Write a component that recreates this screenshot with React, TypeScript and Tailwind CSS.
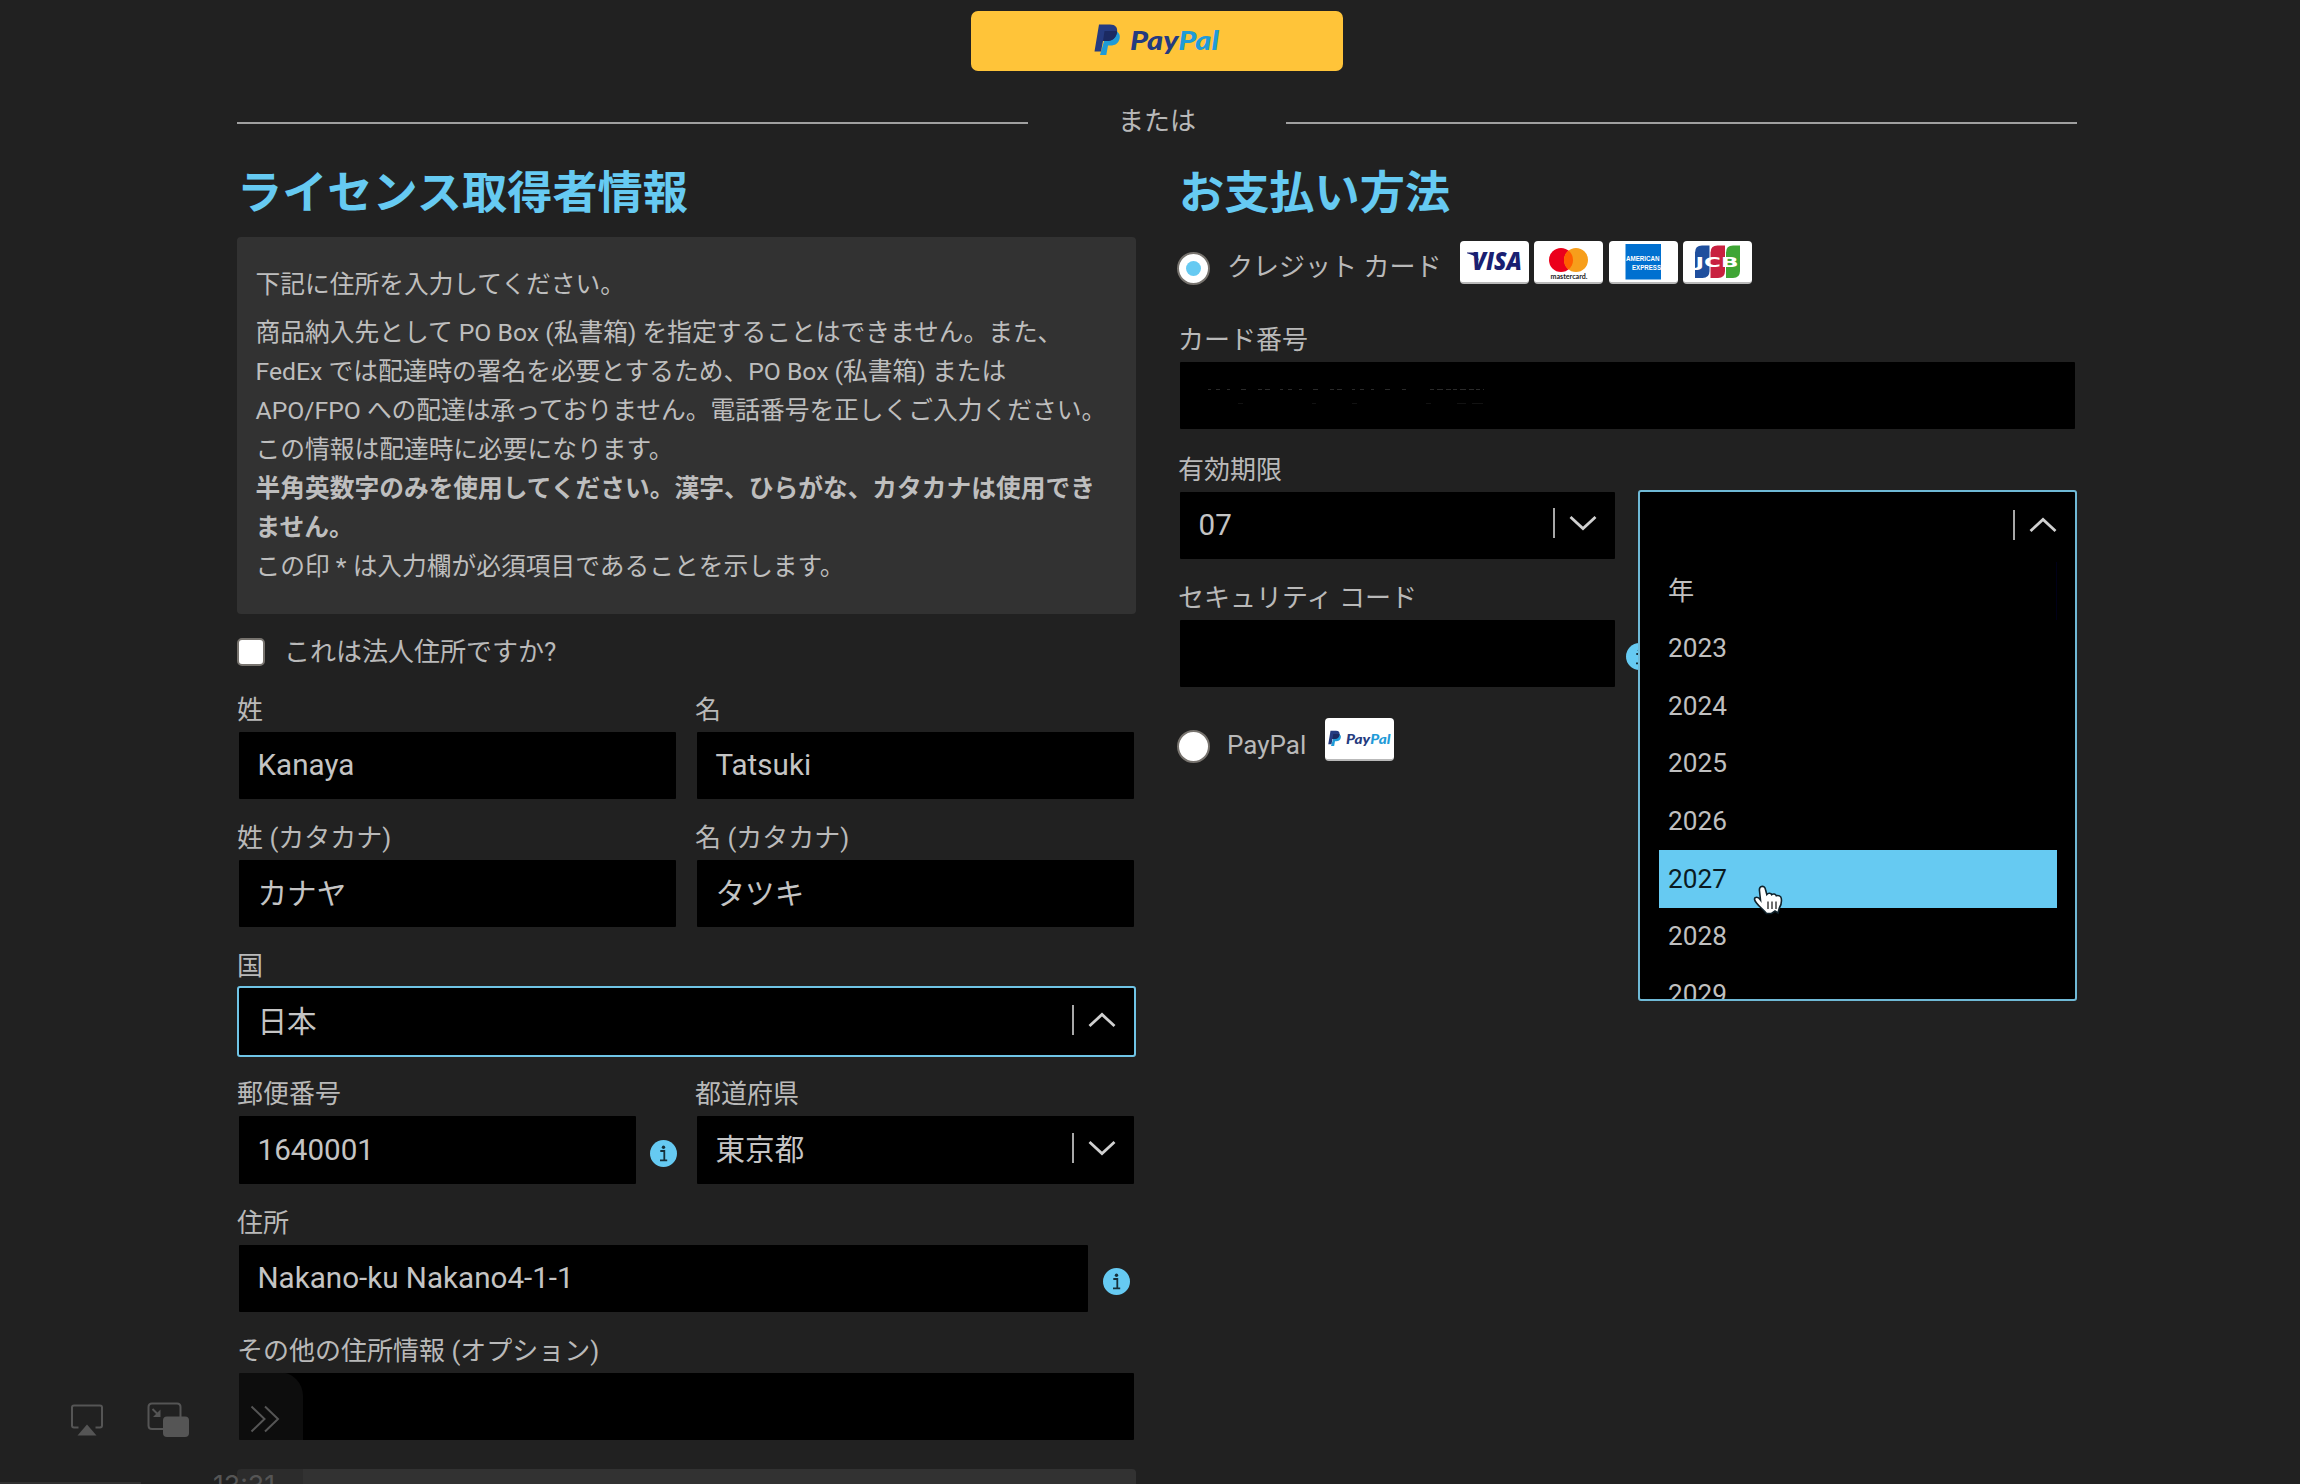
import { ReactNode, useState } from "react";

const FONT = "font-[Roboto,'Noto_Sans_CJK_JP',sans-serif]";

const Chevron = ({ up = false }: { up?: boolean }) => (
  <div className="flex items-center gap-[14px] pb-[4px]">
    <div className="h-[30px] w-[2px] bg-[#a8a8a8]" />
    <svg width="28" height="16" viewBox="0 0 28 16" fill="none" stroke="#d0d0d0" strokeWidth="2.8">
      {up ? <path d="M1.5 14 14 2.5 26.5 14" /> : <path d="M1.5 2 14 13.5 26.5 2" />}
    </svg>
  </div>
);

const InfoIcon = () => (
  <svg className="h-[27px] w-[27px] shrink-0" viewBox="0 0 27 27">
    <circle cx="13.5" cy="13.5" r="13.5" fill="#66caf2" />
    <circle cx="13.5" cy="7.2" r="1.7" fill="#16303a" />
    <path d="M10.3 11h4v9M10 20.300h7.200" stroke="#16303a" strokeWidth="1.800" fill="none" />
  </svg>
);

const Label = ({ children }: { children: ReactNode }) => (
  <label className="flex h-[57px] items-end pb-[2px] text-[26px] leading-[36px] whitespace-pre">{children}</label>
);

const Box = ({ children, className = "" }: { children?: ReactNode; className?: string }) => (
  <div
    className={`flex h-[71.150px] items-center justify-between rounded-[3px] border-2 border-transparent bg-black bg-clip-padding pr-[18px] pl-[18.500px] text-[29.600px] text-[#c4c4c4] ${className}`}
  >
    {children}
  </div>
);

const Field = ({ label, children, className = "" }: { label: string; children: ReactNode; className?: string }) => (
  <div className={className}>
    <Label>{label}</Label>
    {children}
  </div>
);

const PayPalLogo = ({ className }: { className: string }) => (
  <svg className={className} viewBox="0 0 126 32">
    <path d="M13 7h8c4 1 5.600 4 4.500 8-1.200 4.500-4.500 6.500-9 6.500h-2.500l-1.700 9.500H6z" fill="#1f9bd8" />
    <path d="M5 .5h11c5.500 0 8 3 7 8-1.200 6-4.800 8.500-10.500 8.500H9L7 27.500H.5z" fill="#253b80" />
    <path d="M10.500 7h11.500q1.200.1 1.200.4c-1 6.600-4.700 9.600-10.700 9.600H9z" fill="#1b2a62" />
    <text x="36" y="26" fontFamily="Lato" fontSize="26" fontWeight="900" fontStyle="italic" textLength="89" lengthAdjust="spacingAndGlyphs">
      <tspan fill="#253b80">Pay</tspan>
      <tspan fill="#1f9bd8">Pal</tspan>
    </text>
  </svg>
);

const PayCard = ({ children }: { children: ReactNode }) => (
  <div className="flex h-[43px] w-[69px] items-center justify-center overflow-hidden rounded-[4px] border-b-2 border-[#b9b9b9] bg-white">
    {children}
  </div>
);

const Radio = ({ checked = false }: { checked?: boolean }) => (
  <div className="flex h-[33px] w-[33px] items-center justify-center rounded-full border-2 border-[#77736e] bg-white">
    {checked && <div className="h-[15px] w-[15px] rounded-full bg-[#66caf2]" />}
  </div>
);

const CardLogos = () => (
  <div className="flex gap-[5.4px]">
    <PayCard>
      <svg width="69" height="41" viewBox="0 0 69 41">
        <text x="12" y="29" fontFamily="Open Sans" fontSize="25" fontWeight="800" fontStyle="italic" fill="#1a1f71" textLength="50" lengthAdjust="spacingAndGlyphs">VISA</text>
        <path d="M7 11.500h9l3 8q-4-5.500-12-7.300z" fill="#1a1f71" />
      </svg>
    </PayCard>
    <PayCard>
      <svg width="69" height="41" viewBox="0 0 69 41">
        <circle cx="27" cy="19" r="12" fill="#eb001b" />
        <circle cx="42" cy="19" r="12" fill="#f79e1b" />
        <path d="M34.500 9.600a12 12 0 0 1 0 18.800 12 12 0 0 1 0-18.800" fill="#ff5f00" />
        <text x="16.500" y="37.500" fontFamily="Lato" fontSize="8" fontWeight="700" fill="#222" textLength="37" lengthAdjust="spacingAndGlyphs">mastercard.</text>
      </svg>
    </PayCard>
    <PayCard>
      <svg width="69" height="41" viewBox="0 0 69 41">
        <rect x="16.500" y="3" width="35.500" height="35.500" fill="#0070d0" />
        <text x="17" y="20" fontFamily="Liberation Sans" fontSize="8" fontWeight="700" fill="#fff" textLength="33.500" lengthAdjust="spacingAndGlyphs">AMERICAN</text>
        <text x="23" y="28.500" fontFamily="Liberation Sans" fontSize="8" fontWeight="700" fill="#fff" textLength="29" lengthAdjust="spacingAndGlyphs">EXPRESS</text>
      </svg>
    </PayCard>
    <PayCard>
      <svg width="69" height="41" viewBox="0 0 69 41">
        <path d="M19 4.500h7.500V30q0 7-7 7H12V11.500q0-7 7-7" fill="#1f4f9e" />
        <path d="M34.500 4.500H42V30q0 7-7 7h-7.500V11.500q0-7 7-7" fill="#c8203f" />
        <path d="M50 4.500h7V30q0 7-7 7h-7V11.500q0-7 7-7" fill="#3fa535" />
        <text x="12.500" y="26" fontFamily="DejaVu Sans" fontSize="14.500" fontWeight="700" fill="#fff" textLength="43" lengthAdjust="spacingAndGlyphs">JCB</text>
      </svg>
    </PayCard>
  </div>
);

// masked digits, only their faint edges show
const MaskedNumber = () => (
  <svg className="mt-[5px] ml-[8px]" width="280" height="22" viewBox="0 0 280 22" fill="none" stroke="#2a2a2a" strokeWidth="1">
    <path d="M1 2.500h200" strokeDasharray="3 5 4 7 3 11 5 12 4 3 5 10" />
    <path d="M223 2.500h54" strokeDasharray="4 3 6 3 5 2" />
    <path d="M31 16.500h5M105 16.500h4M145 16.500h5M219 16.500h5M250 16.500h9M265 16.500h11" stroke="#121212" />
  </svg>
);

const years = ["年", "2023", "2024", "2025", "2026", "2027", "2028", "2029"];

const YearSelect = () => {
  const [active, setActive] = useState("2027");

  return (
    <div className="h-[511px] w-[439px] overflow-hidden rounded-[3px] border-2 border-[#6fb9d6] bg-black">
      <div className="flex h-[70.500px] items-center justify-end pr-[18px]">
        <Chevron up />
      </div>
      <ul className="mr-[18px] ml-[19px] text-[26.200px]">
        {years.map((y) => (
          <li
            key={y}
            onMouseEnter={() => setActive(y)}
            className={`flex h-[57.600px] items-center pl-[9px] ${y === active ? "bg-[#66caf2] text-[#0a1a22]" : "text-[#c0c0c0]"} ${y === "年" ? "border-r border-[#000018]" : ""}`}
          >
            {y}
          </li>
        ))}
      </ul>
    </div>
  );
};

const Cursor = () => (
  <svg className="absolute top-[885px] left-[1753px]" width="32" height="34" viewBox="0 0 32 34">
    <path
      d="M8.500 1.500C10.500.9 12 2.200 12.500 4.500l1.300 5c1.500-2 4.200-1.500 4.900.2 1.500-1.200 3.900-.8 4.600 1 2-.7 4.700.2 5 2.800.5 3.500-.3 7-2 9.500l-1.300 5-3-2-3.500 2.500h-5C11 25 6 21.500 3.500 18c-2-2.500-2.500-4.500-1.300-5.300 1.600-.9 3.800.2 5.300 2.300L6.500 6C6.200 3.800 6.700 2 8.500 1.500z"
      fill="#fff"
      stroke="#10222b"
      strokeWidth="1.600"
    />
    <path d="M15 16.500V24M19 16.500V24M23 16.500V24" stroke="#222" strokeWidth="1.300" />
  </svg>
);

const PlayerControls = () => (
  <div className="absolute bottom-0 left-0 h-[112px] w-[303px] overflow-hidden rounded-tr-[24px] bg-[#222222]/38 text-[#555]">
    <svg className="absolute top-[31px] left-[70px]" width="34" height="34" viewBox="0 0 34 34">
      <path d="M8.500 24.500H4q-2 0-2-2V4.500q0-2 2-2h26q2 0 2 2v18q0 2-2 2h-4.500" fill="none" stroke="currentColor" strokeWidth="2" />
      <path d="M17 21.500 26.500 32.500h-19z" fill="currentColor" />
    </svg>
    <svg className="absolute top-[30px] left-[147px]" width="43" height="36" viewBox="0 0 43 36">
      <path d="M16 27H5q-3.500 0-3.500-3.500V5q0-3.500 3.500-3.500h25q3.500 0 3.500 3.500v10" fill="none" stroke="currentColor" strokeWidth="2" />
      <rect x="16" y="14.500" width="26" height="20.500" rx="4" fill="currentColor" />
      <path d="m5.500 7 6 6" stroke="currentColor" strokeWidth="2" />
      <path d="M13.500 7.500v7.500H6z" fill="currentColor" />
    </svg>
    <svg className="absolute top-[33px] left-[250px]" width="30" height="28" viewBox="0 0 30 28" fill="none" stroke="currentColor" strokeWidth="2">
      <path d="m1.500 1.500 13 12.500-13 12.500M15 1.500 28 14 15 26.500" />
    </svg>
    <span className="absolute top-[98px] left-[213px] font-[Inter,sans-serif] text-[26.500px] leading-[30px]">13:31</span>
    <div className="absolute bottom-0 left-0 h-[2px] w-[141px] bg-[#303030]" />
  </div>
);

const App = () => (
  <div className={`relative h-[1484px] w-[2300px] overflow-hidden bg-[#212121] text-[#b9b9b9] ${FONT}`}>
    <div className="ml-[237px] w-[1840px] pt-[11px]">
      <button className="mx-auto flex h-[60px] w-[372px] items-center justify-center rounded-[7px] bg-[#ffc439] pb-[2px]">
        <PayPalLogo className="h-[32px] w-[126px]" />
      </button>

      <div className="mt-[32px] flex h-[38px] items-center justify-between">
        <div className="mt-[2px] h-[2px] w-[791px] bg-[#a0a0a0]" />
        <span className="pb-[3px] text-[26px] leading-[38px]">または</span>
        <div className="mt-[2px] h-[2px] w-[791px] bg-[#a0a0a0]" />
      </div>

      <div className="flex justify-between">
        {/* Licensee */}
        <section className="w-[899px]">
          <h2 className="mt-[16px] h-[80px] pt-[5px] text-[45.200px] leading-[64px] font-bold text-[#66caf2]">ライセンス取得者情報</h2>
          <div className="h-[377px] rounded-[4px] bg-[#323232] pt-[28px] pl-[18.500px] text-[24.740px] leading-[39px] text-[#bebebe]">
            <p className="mb-[9px]">下記に住所を入力してください。</p>
            <p>
              商品納入先として PO Box (私書箱) を指定することはできません。また、
              <br />
              FedEx では配達時の署名を必要とするため、PO Box (私書箱) または
              <br />
              APO/FPO への配達は承っておりません。電話番号を正しくご入力ください。
              <br />
              この情報は配達時に必要になります。
            </p>
            <p className="font-bold">
              半角英数字のみを使用してください。漢字、ひらがな、カタカナは使用でき
              <br />
              ません。
            </p>
            <p>この印 * は入力欄が必須項目であることを示します。</p>
          </div>

          <div className="mt-[19px] flex h-[40px] items-start gap-[19px] text-[26px] leading-[39px]">
            <div className="mt-[5px] h-[28px] w-[28px] rounded-[5px] border-2 border-[#77736e] bg-white" />
            これは法人住所ですか?
          </div>

          <div className="flex justify-between">
            <Field label="姓" className="w-[441px]"><Box>Kanaya</Box></Field>
            <Field label="名" className="w-[441px]"><Box>Tatsuki</Box></Field>
          </div>
          <div className="flex justify-between">
            <Field label="姓 (カタカナ)" className="w-[441px]"><Box>カナヤ</Box></Field>
            <Field label="名 (カタカナ)" className="w-[441px]"><Box>タツキ</Box></Field>
          </div>
          <Field label="国"><Box className="border-[#6fc4e6]!">日本<Chevron up /></Box></Field>
          <div className="flex justify-between">
            <Field label="郵便番号" className="w-[441px]">
              <div className="flex items-center gap-[12px]">
                <Box className="w-[401px]">1640001</Box>
                <div className="pt-[7px]"><InfoIcon /></div>
              </div>
            </Field>
            <Field label="都道府県" className="w-[441px]"><Box>東京都<Chevron /></Box></Field>
          </div>
          <Field label="住所">
            <div className="flex items-center gap-[13px]">
              <Box className="w-[853px]">Nakano-ku Nakano4-1-1</Box>
              <div className="pt-[7px]"><InfoIcon /></div>
            </div>
          </Field>
          <Field label="その他の住所情報 (オプション)"><Box /></Field>
          <div className="mt-[27px] h-[60px] rounded-[4px] bg-[#323232]" />
        </section>

        {/* Payment */}
        <section className="w-[899px]">
          <h2 className="mt-[16px] h-[80px] pt-[5px] pl-px text-[45.200px] leading-[64px] font-bold text-[#66caf2]">お支払い方法</h2>
          <div className="ml-[-1px] flex h-[65.500px] items-start">
            <div className="mt-[15px]"><Radio checked /></div>
            <span className="mt-[11px] ml-[17px] w-[233px] text-[26px] leading-[38px]">クレジット カード</span>
            <div className="mt-[4px]"><CardLogos /></div>
          </div>
          <Field label="カード番号"><Box><MaskedNumber /></Box></Field>
          <div className="relative mt-[2px]">
            <Field label="有効期限" className="w-[439px]"><Box>07<Chevron /></Box></Field>
            <Field label="セキュリティ コード">
              <div className="flex items-center gap-[9px]">
                <Box className="w-[439px]" />
                <div className="pt-[7px]"><InfoIcon /></div>
              </div>
            </Field>
            <div className="absolute top-[57.300px] left-[460px]">
              <YearSelect />
            </div>
          </div>
          <div className="mt-[29px] ml-[-1px] flex items-start">
            <div className="mt-[12px]"><Radio /></div>
            <span className="mt-[8px] ml-[17px] w-[98px] text-[26px] leading-[38px]">PayPal</span>
            <PayCard><PayPalLogo className="h-[17px] w-[63px]" /></PayCard>
          </div>
        </section>
      </div>
    </div>
    <Cursor />
    <PlayerControls />
  </div>
);

export default App;
